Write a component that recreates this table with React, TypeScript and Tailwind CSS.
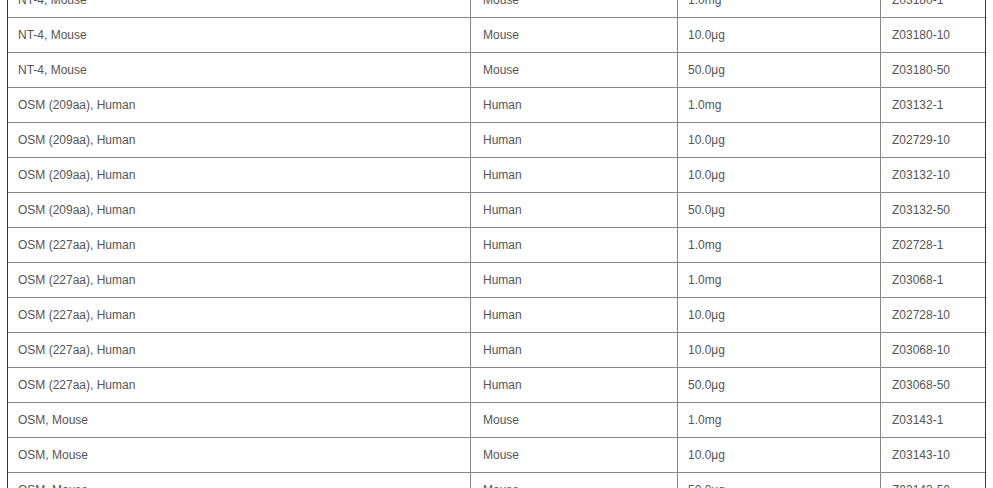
const rows: [string, string, string, string][] = [
  ['NT-4, Mouse', 'Mouse', '1.0mg', 'Z03180-1'],
  ['NT-4, Mouse', 'Mouse', '10.0μg', 'Z03180-10'],
  ['NT-4, Mouse', 'Mouse', '50.0μg', 'Z03180-50'],
  ['OSM (209aa), Human', 'Human', '1.0mg', 'Z03132-1'],
  ['OSM (209aa), Human', 'Human', '10.0μg', 'Z02729-10'],
  ['OSM (209aa), Human', 'Human', '10.0μg', 'Z03132-10'],
  ['OSM (209aa), Human', 'Human', '50.0μg', 'Z03132-50'],
  ['OSM (227aa), Human', 'Human', '1.0mg', 'Z02728-1'],
  ['OSM (227aa), Human', 'Human', '1.0mg', 'Z03068-1'],
  ['OSM (227aa), Human', 'Human', '10.0μg', 'Z02728-10'],
  ['OSM (227aa), Human', 'Human', '10.0μg', 'Z03068-10'],
  ['OSM (227aa), Human', 'Human', '50.0μg', 'Z03068-50'],
  ['OSM, Mouse', 'Mouse', '1.0mg', 'Z03143-1'],
  ['OSM, Mouse', 'Mouse', '10.0μg', 'Z03143-10'],
  ['OSM, Mouse', 'Mouse', '50.0μg', 'Z03143-50'],
];

/** Product list table, scrolled mid-way. */
export default function App(): React.JSX.Element {
  return (
    <div className="h-screen overflow-hidden bg-white font-['Liberation_Sans',Arial,sans-serif] text-[12px] text-[#555]">
      <div className="-mt-[17px] ml-[7px] w-[979px] border-x border-[#333]">
        {rows.map((r, i) => (
          <div key={i} className="flex h-[35px] border-b border-[#888]">
            <div className="flex w-[463px] items-center border-r border-[#888] pl-[10px]">{r[0]}</div>
            <div className="flex w-[207px] items-center border-r border-[#888] pl-[12px]">{r[1]}</div>
            <div className="flex w-[203px] items-center border-r border-[#888] pl-[10px]">{r[2]}</div>
            <div className="flex w-[104px] items-center pl-[11px]">{r[3]}</div>
          </div>
        ))}
      </div>
    </div>
  );
}
